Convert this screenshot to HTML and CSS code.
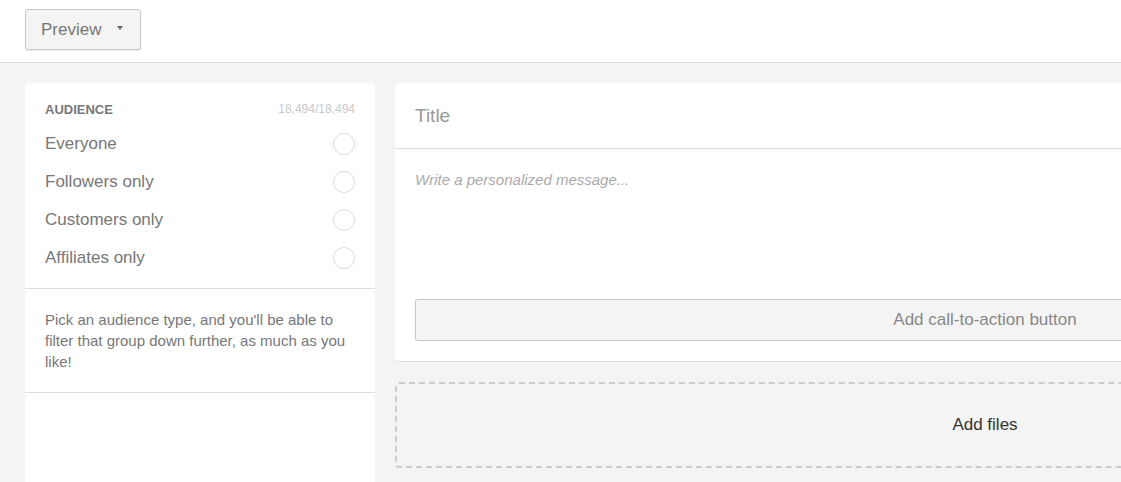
FILE: index.html
```html
<!DOCTYPE html>
<html>
<head>
    <title>New post</title>
    <link rel="stylesheet" href="styles.css">
</head>
<body>
    <div class="topbar">
        <button class="preview-btn">Preview <span class="caret"></span></button>
    </div>

    <div class="main">
        <div class="audience-card">
            <div class="audience-head">
                <span class="audience-label">Audience</span>
                <span class="audience-count">18,494/18,494</span>
            </div>
            <div class="audience-list">
                <div class="audience-option">Everyone <span class="radio"></span></div>
                <div class="audience-option">Followers only <span class="radio"></span></div>
                <div class="audience-option">Customers only <span class="radio"></span></div>
                <div class="audience-option">Affiliates only <span class="radio"></span></div>
            </div>
            <div class="audience-help">
                Pick an audience type, and you'll be able to filter that group down further, as much as you like!
            </div>
        </div>

        <div class="editor">
            <div class="editor-card">
                <div class="title-field">Title</div>
                <div class="message-field">Write a personalized message...</div>
                <div class="cta-wrap">
                    <button class="cta-btn">Add call-to-action button</button>
                </div>
            </div>
            <div class="dropzone">Add files</div>
        </div>
    </div>
</body>
</html>
```

FILE: styles.css
```css
html, body { margin: 0; height: 100%; overflow: hidden; }
body { font-family: "Liberation Sans", Arial, sans-serif; background: #f4f4f4; color: #777; }

.topbar { background: #fff; height: 63px; padding: 9px 25px 0; box-sizing: border-box; border-bottom: 1px solid #ddd; }
.preview-btn { width: 116px; height: 41px; padding: 0 0 0 15px; text-align: left; font: 17px "Liberation Sans", Arial, sans-serif; color: #777; background: #f4f4f4; border: 1px solid #c6c6c6; border-radius: 3px; box-shadow: 0 1px 1px rgba(0,0,0,0.08); }
.caret { display: inline-block; margin-left: 11px; vertical-align: middle; border-left: 3px solid transparent; border-right: 3px solid transparent; border-top: 4px solid #666; position: relative; top: -2px; }

.main { display: flex; gap: 20px; padding: 20px 0 0 25px; width: 1600px; }

.audience-card { width: 350px; flex: none; height: 420px; background: #fff; border-radius: 4px; }
.audience-head { display: flex; justify-content: space-between; align-items: center; padding: 18px 20px 0; height: 16px; }
.audience-label { font-size: 13px; font-weight: bold; text-transform: uppercase; color: #777; }
.audience-count { font-size: 12px; color: #c8c8c8; }
.audience-list { padding: 8px 20px 11px; border-bottom: 1px solid #ddd; }
.audience-option { display: flex; justify-content: space-between; align-items: center; height: 38px; font-size: 17px; }
.radio { width: 20px; height: 20px; border: 1px solid #ddd; border-radius: 50%; }
.audience-help { padding: 20px 20px 20px; font-size: 15px; line-height: 21px; border-bottom: 1px solid #ddd; }

.editor { width: 1180px; flex: none; display: flex; flex-direction: column; gap: 20px; }
.editor-card { background: #fff; border-radius: 4px; border-bottom: 1px solid #ddd; }
.title-field { height: 66px; padding: 0 20px; line-height: 66px; font-size: 19px; color: #999; border-bottom: 1px solid #ddd; box-sizing: border-box; }
.message-field { height: 150px; padding: 22px 20px 0; box-sizing: border-box; font-size: 15px; font-style: italic; color: #aaa; }
.cta-wrap { padding: 0 20px 20px; }
.cta-btn { width: 100%; height: 42px; font: 17px "Liberation Sans", Arial, sans-serif; color: #888; background: #f4f4f4; border: 1px solid #c6c6c6; border-radius: 3px; }

.dropzone { height: 86px; box-sizing: border-box; border: 2px dashed #ccc; border-radius: 4px; display: flex; align-items: center; justify-content: center; font-size: 17px; color: #333; }
```
